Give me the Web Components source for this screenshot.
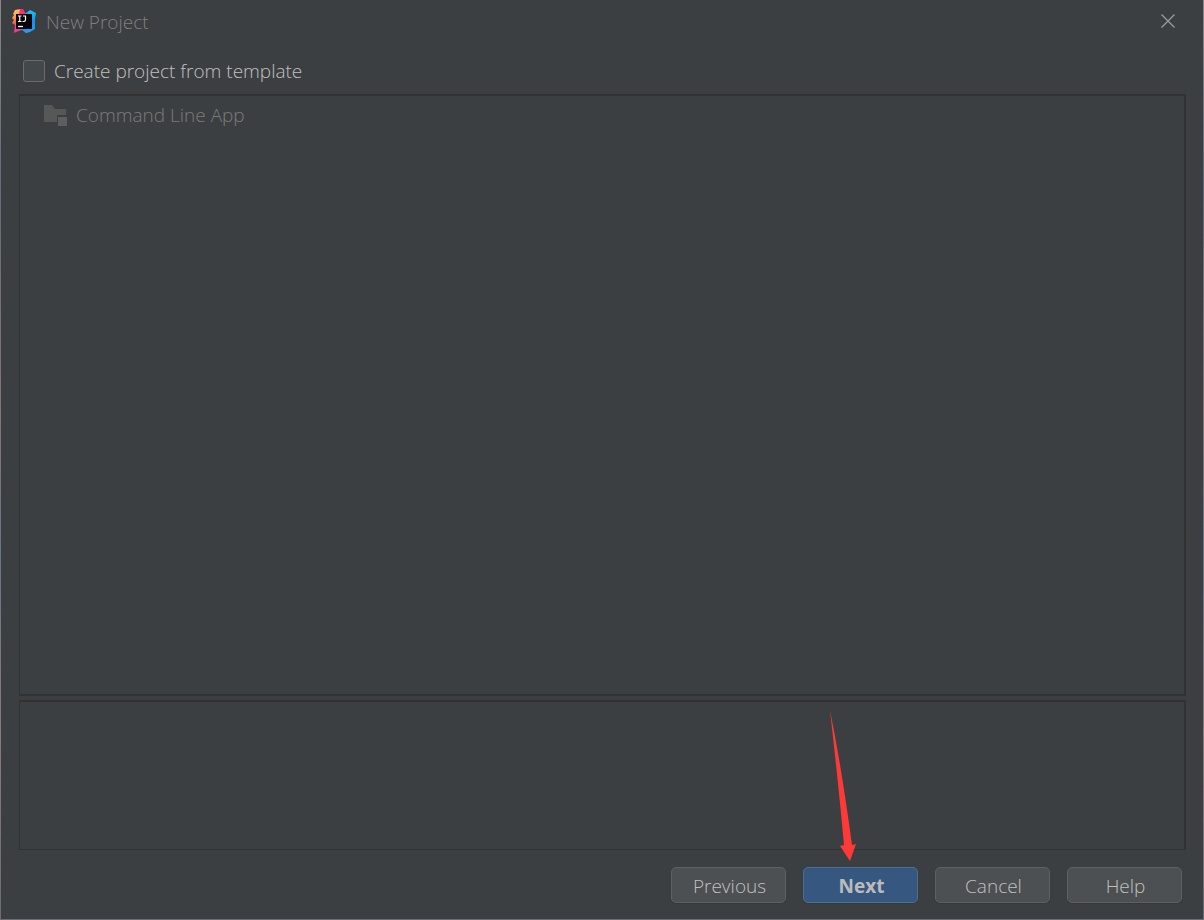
<!DOCTYPE html>
<html lang="en">
<head>
<meta charset="utf-8">
<title>New Project</title>
<style>
  html, body { margin: 0; height: 100%; }
  body {
    background: #3c3f41;
    color: #bbbbbb;
    font: 340 19px/26px "Open Sans", "Noto Sans", sans-serif;
    overflow: hidden;
  }
</style>
</head>
<body>
<wizard-dialog>
  <dialog-title slot="title">New Project</dialog-title>
  <check-option slot="option">Create project from template</check-option>
  <content-panel slot="content" class="list">
    <template-item>Command Line App</template-item>
  </content-panel>
  <content-panel slot="description"></content-panel>
  <dialog-button slot="actions">Previous</dialog-button>
  <dialog-button slot="actions" primary>Next<pointer-arrow slot="marker"></pointer-arrow></dialog-button>
  <dialog-button slot="actions">Cancel</dialog-button>
  <dialog-button slot="actions">Help</dialog-button>
</wizard-dialog>

<script>
function define(name, markup) {
  customElements.define(name, class extends HTMLElement {
    constructor() {
      super();
      this.attachShadow({ mode: "open" }).innerHTML = markup;
      const marker = this.querySelector("[slot=marker]");
      if (marker) marker.setAttribute("aria-hidden", "true");
    }
  });
}

define("wizard-dialog", `
  <style>
    :host {
      display: flex; flex-direction: column; box-sizing: border-box;
      min-height: 100vh; background: #3c3f41;
      border: solid #77757b; border-width: 0 1px 1px;
      border-image: linear-gradient(#8b8587, #646b7c 20%, #8a7373 45%, #69758b 60%, #8d7978 80%, #6c6b78) 1;
    }
    main {
      flex: 1; display: grid; grid-template-rows: auto 1fr 150px;
      padding: 0 17px 0 18px;
    }
    .content { display: grid; margin-bottom: 4px; }
    .description { display: grid; }
    footer {
      display: flex; justify-content: flex-end; gap: 17px;
      padding: 17px 21px 16px;
    }
  </style>
  <slot name="title"></slot>
  <main>
    <slot name="option"></slot>
    <div class="content"><slot name="content"></slot></div>
    <div class="description"><slot name="description"></slot></div>
  </main>
  <footer><slot name="actions"></slot></footer>
`);

define("dialog-title", `
  <style>
    :host { display: block; color: #7f8081; }
    header { display: flex; align-items: center; height: 42px; padding: 0 27px 0 10px; }
    h1 { flex: 1; margin: 0 0 0 10px; font: inherit; padding-top: 2px; }
    button { display: grid; padding: 0; border: 0; background: none; color: #9b9c9d; }
    svg { display: block; }
  </style>
  <header>
    <svg width="25" height="26" viewBox="0 0 25 26" aria-hidden="true">
      <defs>
        <linearGradient id="warm" x1="0" y1="0" x2="0" y2="1">
          <stop offset="0" stop-color="#f9c465"/><stop offset=".35" stop-color="#fb9a45"/>
          <stop offset=".6" stop-color="#f45b59"/><stop offset="1" stop-color="#fd2c9c"/>
        </linearGradient>
        <linearGradient id="cool" x1="0" y1="0" x2="0" y2="1">
          <stop offset="0" stop-color="#17c8ef"/><stop offset=".5" stop-color="#158ff5"/>
          <stop offset="1" stop-color="#14a8f5"/>
        </linearGradient>
        <linearGradient id="base" x1="0" y1="0" x2="1" y2="0">
          <stop offset="0" stop-color="#ff318c"/><stop offset=".5" stop-color="#8762d9"/>
          <stop offset=".8" stop-color="#087cfa"/>
        </linearGradient>
      </defs>
      <path d="M5 20H19V22L15 25L11 22L4 24Z" fill="url(#base)"/>
      <path d="M4 2L10 1V7H6V22H9L3 25L4 17L1 15L3 12L1 10L3 7L2 6Z" fill="url(#warm)"/>
      <path d="M9 1H12L15 6H8Z" fill="#fe2c79"/>
      <path d="M14 6L19 2L25 5L24 11V21L19 24L15 25L12 22L20 20V7Z" fill="url(#cool)"/>
      <rect x="5" y="6" width="16" height="15" fill="#080407"/>
      <path d="M7 8H10.500M8.750 8V13M7 13.500H10.500M12 8H14.500V11.500Q14.500 13.500 13 13.500H11.500" fill="none" stroke="#fff" stroke-width="1.200"/>
      <path d="M7 18.500h5" stroke="#fff" stroke-width="1.300"/>
    </svg>
    <h1><slot></slot></h1>
    <button type="button" aria-label="Close">
      <svg width="16" height="16" viewBox="0 0 16 16"><path d="M1.500 1.500l13 13M14.500 1.500l-13 13" stroke="currentColor" stroke-width="1.300"/></svg>
    </button>
  </header>
`);

define("check-option", `
  <style>
    :host { display: block; color: #c0c0c0; }
    label { display: flex; align-items: center; gap: 9px; height: 52px; padding: 6px 0 0 4px; box-sizing: border-box; }
    input {
      appearance: none; box-sizing: border-box; width: 22px; height: 22px; margin: 0;
      border: 1px solid #6b6b6b; border-radius: 3px; background: #43494a;
    }
    input:checked { background: #4b6eaf; }
  </style>
  <label><input type="checkbox"><span><slot></slot></span></label>
`);

define("content-panel", `
  <style>
    :host {
      display: block; box-sizing: border-box;
      border: solid #323232; border-width: 2px 2px 1px 1px;
    }
    :host(.list) { border-bottom-width: 2px; padding: 6px 0 0 24px; }
  </style>
  <slot></slot>
`);

define("template-item", `
  <style>
    :host { display: flex; align-items: center; gap: 8px; color: #7b7b7b; }
    svg { flex: none; }
  </style>
  <svg width="24" height="22" viewBox="0 0 24 22" aria-hidden="true">
    <path d="M0 1h8l3 4h11v6h-9v7H0z" fill="#565857"/>
    <rect x="14" y="13" width="9" height="9" fill="#5d5e5e"/>
  </svg>
  <span><slot></slot></span>
`);

define("dialog-button", `
  <style>
    :host { display: block; position: relative; }
    button {
      display: block; box-sizing: border-box; width: 115px; height: 36px; padding: 2px 0 0 2px;
      border: 1px solid #5e6060; border-radius: 5px; background: #4c5052;
      color: #c0c0c0; font: inherit; line-height: 32px;
      box-shadow: 0 1px 1px #36393b;
    }
    :host([primary]) button { background: #365880; border-color: #4c708c; color: #bbbbbb; font-weight: bold; }
    ::slotted([slot="marker"]) { position: absolute; left: 26px; bottom: calc(100% + 5px); }
  </style>
  <button type="button"><slot></slot></button>
  <slot name="marker"></slot>
`);

define("pointer-arrow", `
  <style>
    :host { display: block; pointer-events: none; }
    svg { display: block; }
  </style>
  <svg width="30" height="152" viewBox="0 0 30 152" aria-hidden="true">
    <path d="M1 0Q13 60 23 135L27 134L21 151L11 136L15 135Q10 80 1 0Z" fill="#ff3838"/>
  </svg>
`);
</script>
</body>
</html>
